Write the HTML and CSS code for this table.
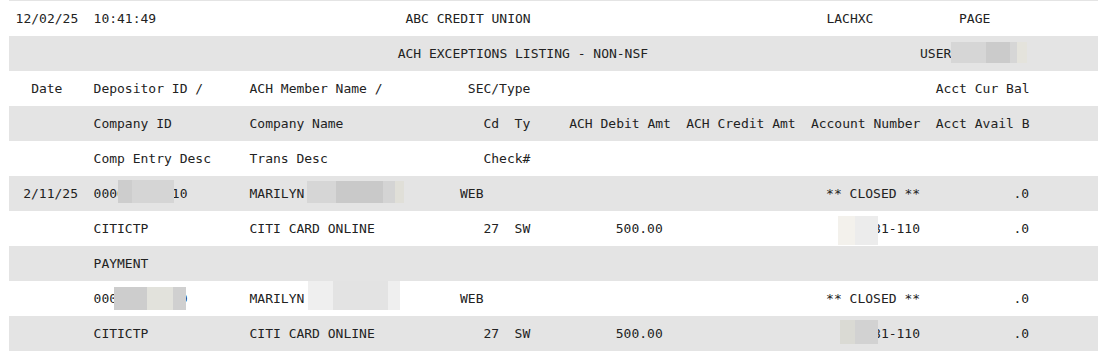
FILE: index.html
```html
<!DOCTYPE html>
<html lang="en">
<head>
<meta charset="utf-8">
<title>ACH Exceptions Listing - Non-NSF</title>
<link rel="stylesheet" href="styles.css">
</head>
<body>
<div class="report">
  <div class="row">
    <span class="col-date">12/02/25</span>
    <span class="col-id">10:41:49</span>
    <span class="col-bank">ABC CREDIT UNION</span>
    <span class="col-prog">LACHXC</span>
    <span class="col-page">PAGE</span>
  </div>
  <div class="row">
    <span class="col-title">ACH EXCEPTIONS LISTING - NON-NSF</span>
    <span class="col-user">USER<i class="redact r-user"></i></span>
  </div>
  <div class="row">
    <span class="col-date center">Date</span>
    <span class="col-id">Depositor ID /</span>
    <span class="col-name">ACH Member Name /</span>
    <span class="col-sec-head">SEC/Type</span>
    <span class="col-bal left">Acct Cur Bal</span>
  </div>
  <div class="row">
    <span class="col-id">Company ID</span>
    <span class="col-name">Company Name</span>
    <span class="col-cd">Cd</span>
    <span class="col-ty">Ty</span>
    <span class="col-debit left">ACH Debit Amt</span>
    <span class="col-credit">ACH Credit Amt</span>
    <span class="col-acct left">Account Number</span>
    <span class="col-bal left">Acct Avail B</span>
  </div>
  <div class="row">
    <span class="col-id">Comp Entry Desc</span>
    <span class="col-name">Trans Desc</span>
    <span class="col-cd">Check#</span>
  </div>
  <div class="row">
    <span class="col-date right">2/11/25</span>
    <span class="col-id">0000      10<i class="redact r-id1"></i></span>
    <span class="col-name">MARILYN<i class="redact r-name1"></i></span>
    <span class="col-sec">WEB</span>
    <span class="col-acct">** CLOSED **</span>
    <span class="col-bal">.0</span>
  </div>
  <div class="row">
    <span class="col-id">CITICTP</span>
    <span class="col-name">CITI CARD ONLINE</span>
    <span class="col-cd">27</span>
    <span class="col-ty">SW</span>
    <span class="col-debit">500.00</span>
    <span class="col-acct">81-110<i class="redact r-acct1"></i></span>
    <span class="col-bal">.0</span>
  </div>
  <div class="row">
    <span class="col-id">PAYMENT</span>
  </div>
  <div class="row">
    <span class="col-id">000        0<i class="redact r-id2"></i></span>
    <span class="col-name">MARILYN<i class="redact r-name2"></i></span>
    <span class="col-sec">WEB</span>
    <span class="col-acct">** CLOSED **</span>
    <span class="col-bal">.0</span>
  </div>
  <div class="row">
    <span class="col-id">CITICTP</span>
    <span class="col-name">CITI CARD ONLINE</span>
    <span class="col-cd">27</span>
    <span class="col-ty">SW</span>
    <span class="col-debit">500.00</span>
    <span class="col-acct">81-110<i class="redact r-acct2"></i></span>
    <span class="col-bal">.0</span>
  </div>
</div>
</body>
</html>
```

FILE: styles.css
```css
html, body {
  margin: 0;
  padding: 0;
  background: #ffffff;
}

.report {
  margin: 0 9px;
  border-top: 1px solid #e4e4e4;
  font-family: "DejaVu Sans Mono", "Liberation Mono", monospace;
  font-size: 13px;
  line-height: 35px;
  color: #222222;
}

.row {
  display: grid;
  grid-template-columns: repeat(131, 7.8px);
  height: 35px;
  padding-left: 6.6px;
  white-space: pre;
}

.row:nth-child(even) {
  background: #e4e4e4;
}

.row > span {
  position: relative;
  min-width: 0;
}

.center { text-align: center; }
.right { text-align: right; }
.left { text-align: left !important; }

.col-date { grid-column: 1 / 9; }
.col-id { grid-column: 11 / 31; }
.col-name { grid-column: 31 / 58; }
.col-sec { grid-column: 58 / 61; }
.col-sec-head { grid-column: 59 / 67; }
.col-cd { grid-column: 61 / 64; }
.col-ty { grid-column: 65 / 68; }
.col-debit { grid-column: 72 / 84; text-align: right; }
.col-credit { grid-column: 87 / 101; }
.col-acct { grid-column: 103 / 117; text-align: right; }
.col-bal { grid-column: 119 / 131; text-align: right; }
.col-bank { grid-column: 51 / 67; }
.col-title { grid-column: 50 / 82; }
.col-prog { grid-column: 105 / 111; }
.col-page { grid-column: 122 / 126; }
.col-user { grid-column: 117 / 131; }

.redact {
  position: absolute;
  display: block;
}

.r-user {
  left: 31px;
  top: 6px;
  width: 76px;
  height: 21px;
  background: linear-gradient(to right, #d6d6d6 0 35px, #cbcbcb 35px 59px, #d6d6d6 59px 66px, #e4e3dc 66px);
}

.r-id1 {
  left: 24.4px;
  top: 4px;
  width: 56px;
  height: 23px;
  background: linear-gradient(to right, #cdcdcd 0 14px, #d5d5d5 14px);
}

.r-name1 {
  left: 57.4px;
  top: 5px;
  width: 97px;
  height: 22px;
  background: linear-gradient(to right, #d6d6d6 0 29px, #c9c9c9 29px 76px, #d4d4d4 76px 88px, #e0dfd8 88px);
}

.r-id2 {
  left: 20.4px;
  top: 6px;
  width: 72px;
  height: 23px;
  background: linear-gradient(to right, #cdcdcd 0 33px, #e2e2dc 33px 59px, #d0d0d0 59px);
}

.r-name2 {
  left: 58.4px;
  top: 0;
  width: 92px;
  height: 29px;
  background: linear-gradient(to right, #efefef 0 25px, #e3e3e3 25px 80px, #efefef 80px);
}

.r-acct1 {
  left: 26.8px;
  top: 5px;
  width: 40px;
  height: 29px;
  background: linear-gradient(to right, #f3f1ec 0 17px, #ececec 17px);
}

.r-acct2 {
  left: 28.8px;
  top: 4px;
  width: 38px;
  height: 24px;
  background: linear-gradient(to right, #dadad4 0 15px, #d2d2d2 15px);
}
```
